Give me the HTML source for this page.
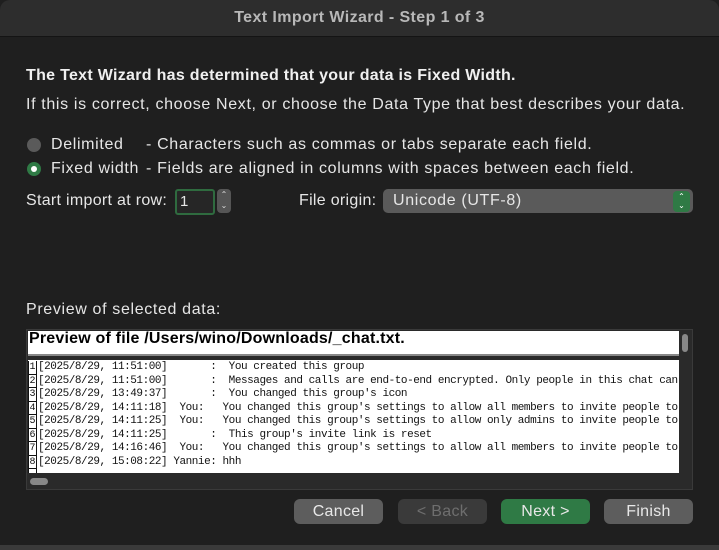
<html><head><style>
body{margin:0;width:719px;height:550px;background:#1f1f1f;font-family:"Liberation Sans",sans-serif;color:#e6e6e6;overflow:hidden;position:relative}
.a{position:absolute;white-space:nowrap}
.title{left:0;top:0;width:719px;height:36px;background:#2d2d2d;border-bottom:1px solid #141414;text-align:center;line-height:36px;font-size:16px;letter-spacing:0.4px;font-weight:bold;color:#b8b8b8;border-radius:10px 10px 0 0}
.t{font-size:16px;letter-spacing:0.65px}
.radio{width:14px;height:14px;border-radius:50%;background:#5a5a5a}
.btn{height:25px;line-height:25px;text-align:center;font-size:16px;letter-spacing:0.3px;border-radius:6px;background:#5d5d5d;color:#e8e8e8;width:89px}
.mono{font-family:"Liberation Mono",monospace;font-size:11px;letter-spacing:-0.45px;color:#111;line-height:13.5px}
.n{display:inline-block;width:7px;border:1px solid #111;border-top:none;letter-spacing:0;font-size:10px;text-align:center;height:12.5px;margin-right:1px;vertical-align:top;line-height:13px}
</style></head><body>
<div class="a title">Text Import Wizard - Step 1 of 3</div>
<div class="a t" style="left:26px;top:67px;font-weight:bold;color:#f0f0f0;letter-spacing:0.3px">The Text Wizard has determined that your data is Fixed Width.</div>
<div class="a t" style="left:26px;top:96px">If this is correct, choose Next, or choose the Data Type that best describes your data.</div>
<div class="a radio" style="left:27px;top:138px"></div>
<div class="a t" style="left:51px;top:136px">Delimited</div>
<div class="a t" style="left:146px;top:136px">- Characters such as commas or tabs separate each field.</div>
<div class="a radio" style="left:27px;top:162px;background:#2f7a45"><div style="position:absolute;left:4px;top:4px;width:6px;height:6px;border-radius:50%;background:#fff"></div></div>
<div class="a t" style="left:51px;top:160px">Fixed width</div>
<div class="a t" style="left:146px;top:160px">- Fields are aligned in columns with spaces between each field.</div>
<div class="a t" style="left:26px;top:192px;letter-spacing:0.3px">Start import at row:</div>
<div class="a" style="left:175px;top:189px;height:22px;border:2px solid #2f6b3f;border-radius:3px;background:#262626;font-size:15px;line-height:22px;padding-left:3px;width:33px">1</div>
<div class="a" style="left:217px;top:189px;width:14px;height:24px;background:#555;border-radius:4px;color:#ddd;font-size:8px;text-align:center;line-height:11px">⌃<br>⌄</div>
<div class="a t" style="left:299px;top:192px;letter-spacing:0.3px">File origin:</div>
<div class="a" style="left:383px;top:189px;width:310px;height:24px;background:#5a5a5a;border-radius:5px"><span class="a t" style="left:10px;top:3px">Unicode (UTF-8)</span><div class="a" style="right:3px;top:2px;width:17px;height:20px;background:#2f7a45;border-radius:4px;color:#fff;font-size:8px;text-align:center;line-height:9px;padding-top:1px">⌃<br>⌄</div></div>
<div class="a t" style="left:26px;top:301px">Preview of selected data:</div>
<div class="a" style="left:26px;top:329px;width:667px;height:161px;background:#2a2a2a;border:1px solid #3a3a3a;box-sizing:border-box"></div>
<div class="a" style="left:28px;top:331px;width:651px;height:25px;background:#fff;border-bottom:2px solid #888;box-sizing:border-box;color:#000;font-size:16px;letter-spacing:0.2px;font-weight:bold;padding-left:1px;line-height:16px">Preview of file /Users/wino/Downloads/_chat.txt.</div>
<div class="a" style="left:28px;top:360px;width:651px;height:113px;background:#fff;overflow:hidden"><div class="mono" style="padding-top:1px;white-space:pre"><span class="n">1</span>[2025/8/29, 11:51:00]       :  You created this group
<span class="n">2</span>[2025/8/29, 11:51:00]       :  Messages and calls are end-to-end encrypted. Only people in this chat can read
<span class="n">3</span>[2025/8/29, 13:49:37]       :  You changed this group's icon
<span class="n">4</span>[2025/8/29, 14:11:18]  You:   You changed this group's settings to allow all members to invite people to
<span class="n">5</span>[2025/8/29, 14:11:25]  You:   You changed this group's settings to allow only admins to invite people to
<span class="n">6</span>[2025/8/29, 14:11:25]       :  This group's invite link is reset
<span class="n">7</span>[2025/8/29, 14:16:46]  You:   You changed this group's settings to allow all members to invite people to
<span class="n">8</span>[2025/8/29, 15:08:22] Yannie: hhh
<span class="n"> </span></div></div>
<div class="a" style="left:682px;top:334px;width:6px;height:18px;background:#888;border-radius:3px"></div>
<div class="a" style="left:30px;top:478px;width:18px;height:7px;background:#888;border-radius:4px"></div>
<div class="a btn" style="left:294px;top:499px">Cancel</div>
<div class="a btn" style="left:398px;top:499px;background:#3a3a3a;color:#6e6e6e">&lt; Back</div>
<div class="a btn" style="left:501px;top:499px;background:#2f7a45">Next &gt;</div>
<div class="a btn" style="left:604px;top:499px">Finish</div>
<div class="a" style="left:0;top:545px;width:719px;height:5px;background:#3a3a3a"></div>
</body></html>
